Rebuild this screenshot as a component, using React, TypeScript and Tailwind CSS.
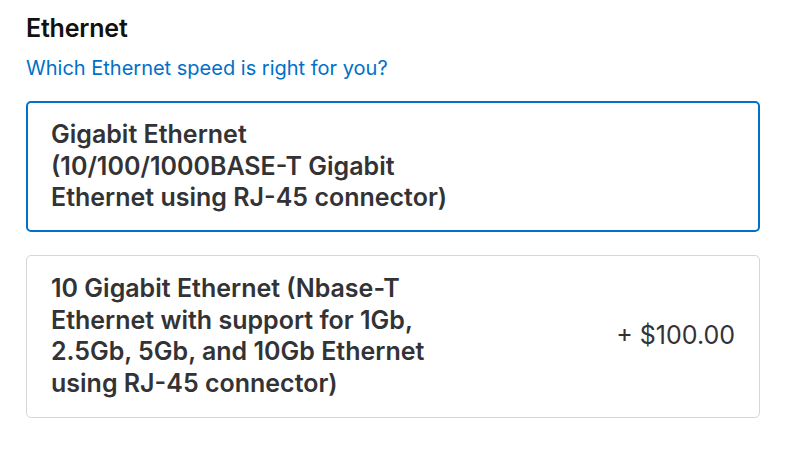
import React from 'react';

type Option = {
  id: string;
  label: string;
  price?: string;
};

const OPTIONS: Option[] = [
  {
    id: 'gigabit',
    label: 'Gigabit Ethernet (10/100/1000BASE-T Gigabit Ethernet using RJ-45 connector)',
  },
  {
    id: '10gig',
    label: '10 Gigabit Ethernet (Nbase-T Ethernet with support for 1Gb, 2.5Gb, 5Gb, and 10Gb Ethernet using RJ-45 connector)',
    price: '+ $100.00',
  },
];

const App: React.FC = () => {
  const selected = 'gigabit';

  return (
    <div className="min-h-screen bg-white px-[26px] pt-[13px] font-['Inter','Liberation_Sans',sans-serif] text-[#111111]">
      <h2 className="text-[25px] font-semibold leading-[30px] tracking-[-0.2px]">Ethernet</h2>
      <a href="#" className="mt-[11px] block text-[20px] leading-[28px] text-[#0070c9]">
        Which Ethernet speed is right for you?
      </a>
      <div className="mt-[19px] flex w-[734px] flex-col gap-[23px]">
        {OPTIONS.map(opt => (
          <button
            key={opt.id}
            className={
              opt.id === selected
                ? 'flex items-center justify-between rounded-[5px] border-2 border-[#0071c6] px-[23px] py-[16px] text-left'
                : 'flex items-center justify-between rounded-[5px] border-[1.5px] border-[#d6d6d6] px-[24px] py-[17.5px] text-left'
            }
          >
            <span className="w-[425px] text-[25px] font-semibold leading-[31.5px] text-[#333336]">{opt.label}</span>
            {opt.price && <span className="text-[25px] leading-[31.5px] text-[#333336]">{opt.price}</span>}
          </button>
        ))}
      </div>
    </div>
  );
};

export default App;
